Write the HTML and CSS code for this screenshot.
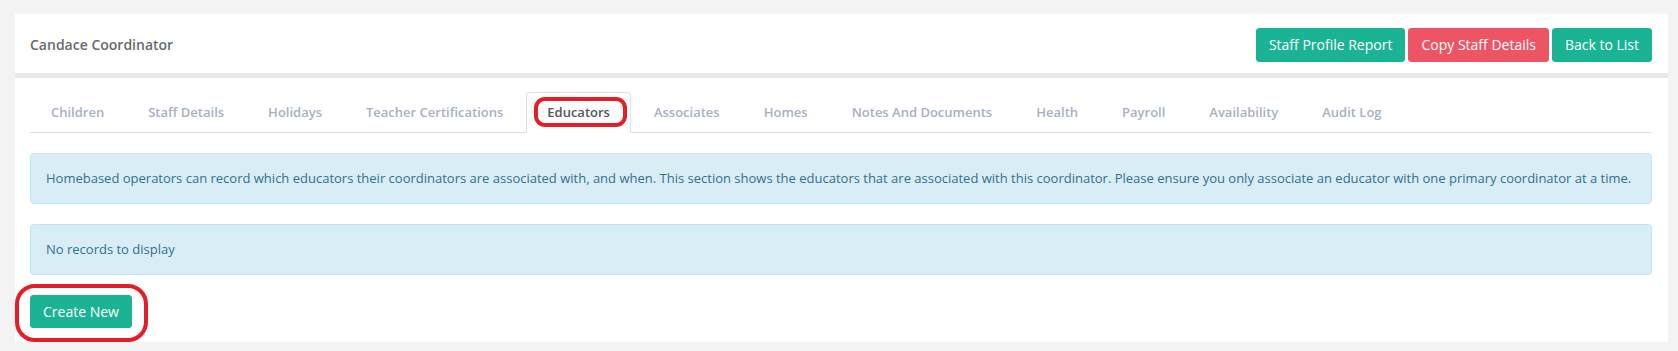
FILE: index.html
```html
<!DOCTYPE html>
<html lang="en">
<head>
    <meta charset="UTF-8">
    <meta name="viewport" content="width=device-width, initial-scale=1.0">
    <title>Candace Coordinator</title>
    <link rel="stylesheet" href="styles.css">
</head>
<body>
    <div class="ibox">
        <div class="ibox-title">
            <h5>Candace Coordinator</h5>
            <div class="title-actions">
                <button class="btn btn-primary">Staff Profile Report</button>
                <button class="btn btn-danger">Copy Staff Details</button>
                <button class="btn btn-primary">Back to List</button>
            </div>
        </div>
        <div class="ibox-content">
            <ul class="nav-tabs">
                <li><a>Children</a></li>
                <li><a>Staff Details</a></li>
                <li><a>Holidays</a></li>
                <li><a>Teacher Certifications</a></li>
                <li class="active"><a>Educators<span class="mark mark-tab"></span></a></li>
                <li><a>Associates</a></li>
                <li><a>Homes</a></li>
                <li><a>Notes And Documents</a></li>
                <li><a>Health</a></li>
                <li><a>Payroll</a></li>
                <li><a>Availability</a></li>
                <li><a>Audit Log</a></li>
            </ul>
            <div class="tab-content">
                <div class="alert alert-info">Homebased operators can record which educators their coordinators are associated with, and when. This section shows the educators that are associated with this coordinator. Please ensure you only associate an educator with one primary coordinator at a time.</div>
                <div class="alert alert-info">No records to display</div>
                <div class="create-wrap">
                    <button class="btn btn-primary btn-create">Create New</button>
                    <span class="mark mark-create"></span>
                </div>
            </div>
        </div>
    </div>
</body>
</html>
```
FILE: styles.css
```css
body {
    margin: 0;
    padding: 14px 10px 10px 15px;
    background-color: #f3f3f4;
    font-family: "Open Sans", "Liberation Sans", sans-serif;
    font-size: 13px;
    line-height: 1.42857;
    color: #676a6c;
}

.ibox {
    background-color: #fff;
}

.ibox-title {
    display: flex;
    align-items: center;
    justify-content: space-between;
    padding: 14px 16px 11px 15px;
    border-bottom: 5px solid #e7eaec;
}

.ibox-title h5 {
    margin: 0;
    font-size: 14px;
    font-weight: 600;
    color: #676a6c;
}

.title-actions {
    display: flex;
    gap: 3px;
}

.btn {
    font-family: "Open Sans", "Liberation Sans", sans-serif;
    font-size: 14px;
    line-height: 20px;
    padding: 6px 12px;
    border: 1px solid transparent;
    border-radius: 3px;
    color: #fff;
    cursor: pointer;
}

.btn-primary {
    background-color: #1ab394;
    border-color: #1ab394;
}

.btn-danger {
    background-color: #ed5565;
    border-color: #ed5565;
}

.ibox-content {
    padding: 14px 16px 14px 15px;
}

.nav-tabs {
    display: flex;
    margin: 0;
    padding: 0;
    list-style: none;
    border-bottom: 1px solid #e0e0e0;
}

.nav-tabs li {
    margin-right: 2px;
    margin-bottom: -1px;
}

.nav-tabs a {
    position: relative;
    display: block;
    padding: 10px 20px;
    line-height: 19px;
    font-weight: 600;
    color: #a7b1c2;
    border: 1px solid transparent;
    border-radius: 4px 4px 0 0;
}

.nav-tabs .active a {
    color: #555;
    background-color: #fff;
    border-color: #e0e0e0 #e0e0e0 #fff;
}

.tab-content {
    padding-top: 20px;
}

.alert {
    padding: 15px;
    margin-bottom: 20px;
    line-height: 19px;
    border: 1px solid transparent;
    border-radius: 4px;
}

.alert-info {
    color: #31708f;
    background-color: #d9edf7;
    border-color: #bce8f1;
}

.create-wrap {
    position: relative;
    display: inline-block;
    vertical-align: top;
}

.btn-create {
    display: block;
    padding: 6px 12px 5px;
}

.mark {
    position: absolute;
    box-sizing: border-box;
    border: 4px solid #e41e26;
    pointer-events: none;
}

.mark-tab {
    left: 7px;
    top: 4px;
    width: 93px;
    height: 30px;
    border-radius: 11px;
}

.mark-create {
    left: -15px;
    top: -11px;
    width: 133px;
    height: 58px;
    border-radius: 20px;
}
```
